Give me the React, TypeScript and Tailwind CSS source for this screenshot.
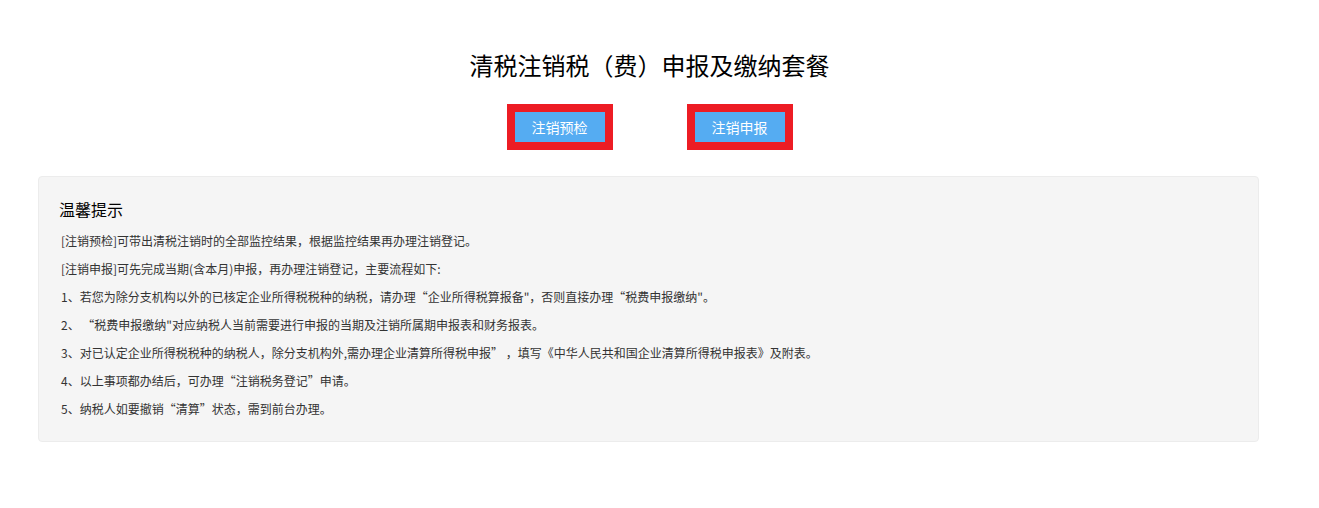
const lines = [
  '[注销预检]可带出清税注销时的全部监控结果，根据监控结果再办理注销登记。',
  '[注销申报]可先完成当期(含本月)申报，再办理注销登记，主要流程如下:',
  '1、若您为除分支机构以外的已核定企业所得税税种的纳税，请办理“企业所得税算报备"，否则直接办理“税费申报缴纳"。',
  '2、 “税费申报缴纳"对应纳税人当前需要进行申报的当期及注销所属期申报表和财务报表。',
  '3、对已认定企业所得税税种的纳税人，除分支机构外,需办理企业清算所得税申报” ，填写《中华人民共和国企业清算所得税申报表》及附表。',
  '4、以上事项都办结后，可办理“注销税务登记”申请。',
  '5、纳税人如要撤销“清算”状态，需到前台办理。',
];

function ActionButton({ label }: { label: string }) {
  return (
    <div className="border-8 border-[#ed1c24]">
      <button className="w-[90px] h-[30px] bg-[#55acf2] text-white text-[14px] leading-[30px]">
        {label}
      </button>
    </div>
  );
}

export default function App() {
  return (
    <div
      className="w-[1299px] bg-white text-[#333] pt-[49px]"
      style={{ fontFamily: '"Microsoft YaHei", "Noto Sans CJK SC", sans-serif' }}
    >
      <h1 className="text-center text-[24px] leading-[32px] text-black">清税注销税（费）申报及缴纳套餐</h1>

      <div className="flex justify-center gap-[74px] mt-[23px]">
        <ActionButton label="注销预检" />
        <ActionButton label="注销申报" />
      </div>

      <div className="mt-[26px] ml-[38px] w-[1221px] bg-[#f5f5f5] border border-[#ececec] rounded-[4px] pl-5 pt-[20px] pb-[18px]">
        <h2 className="text-[16px] leading-[24px] text-black">温馨提示</h2>
        <div className="mt-[6px]">
          {lines.map((l, i) => (
            <p key={i} className="text-[12px] leading-[28px] pl-[2px] whitespace-pre">
              {l}
            </p>
          ))}
        </div>
      </div>
    </div>
  );
}
